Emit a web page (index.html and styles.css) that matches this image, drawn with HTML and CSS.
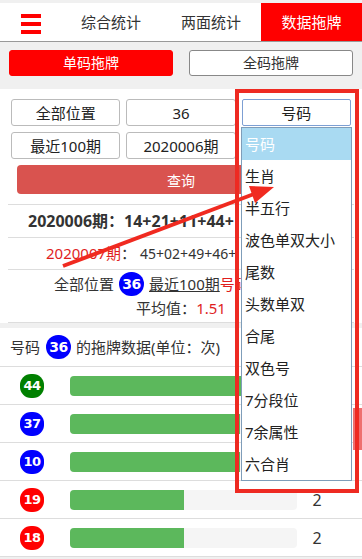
FILE: index.html
```html
<!DOCTYPE html>
<html lang="zh">
<head>
<meta charset="utf-8">
<title>数据拖牌</title>
<link rel="stylesheet" href="styles.css">
</head>
<body>
<div class="page">
  <header class="nav">
    <div class="menu"><span></span><span></span><span></span></div>
    <div class="tab">综合统计</div>
    <div class="tab">两面统计</div>
    <div class="tab active">数据拖牌</div>
  </header>

  <div class="modebar">
    <div class="mode on">单码拖牌</div>
    <div class="mode">全码拖牌</div>
  </div>

  <section class="query">
    <div class="selects">
      <div class="sel">全部位置</div>
      <div class="sel">36</div>
      <div class="sel focus">号码</div>
      <div class="sel">最近100期</div>
      <div class="sel">2020006期</div>
      <div class="sel">全部</div>
    </div>
    <div class="submit">查询</div>
    <ul class="results">
      <li class="r1">2020006期：14+21+11+44+</li>
      <li class="r2"><span class="red">2020007期</span>：<span class="nums">45+02+49+46+</span></li>
      <li class="r3">
        <div class="l1">全部位置 <span class="ball b lg">36</span> <u>最近100期</u><span class="red">号码</span></div>
        <div class="l2">平均值：<span class="red">1.51</span></div>
      </li>
    </ul>
  </section>

  <section class="data">
    <div class="data-head">号码 <span class="ball b lg">36</span> 的拖牌数据(单位：次)</div>
    <div class="row"><span class="ball g">44</span><div class="bar"><div class="fill" style="width:100%"></div></div><span class="cnt">4</span></div>
    <div class="row"><span class="ball b">37</span><div class="bar"><div class="fill" style="width:75%"></div></div><span class="cnt">3</span></div>
    <div class="row"><span class="ball b">10</span><div class="bar"><div class="fill" style="width:75%"></div></div><span class="cnt">3</span></div>
    <div class="row"><span class="ball r">19</span><div class="bar"><div class="fill" style="width:50%"></div></div><span class="cnt">2</span></div>
    <div class="row"><span class="ball r">18</span><div class="bar"><div class="fill" style="width:50%"></div></div><span class="cnt">2</span></div>
  </section>

  <div class="sidetab"></div>

  <ul class="opts">
    <li class="hl">号码</li>
    <li>生肖</li>
    <li>半五行</li>
    <li>波色单双大小</li>
    <li>尾数</li>
    <li>头数单双</li>
    <li>合尾</li>
    <li>双色号</li>
    <li>7分段位</li>
    <li>7余属性</li>
    <li>六合肖</li>
  </ul>

  <div class="frame"></div>

  <svg class="arrow" width="362" height="559" viewBox="0 0 362 559">
    <line x1="63" y1="266" x2="254" y2="194" stroke="#f02a20" stroke-width="4"/>
    <polygon points="274,187 255,203 249,186" fill="#f02a20"/>
  </svg>
</div>
</body>
</html>
```

FILE: styles.css
```css
* { box-sizing: border-box; }

body {
  margin: 0;
  background: #f0f0f0;
  font-family: "Noto Sans", "Noto Sans CJK SC", sans-serif;
  color: #333;
}

.page {
  position: relative;
  width: 362px;
  height: 559px;
  overflow: hidden;
}

/* top navigation */
.nav {
  margin-top: 3px;
  height: 39px;
  background: #fff;
  border-bottom: 1px solid #999;
  display: grid;
  grid-template-columns: 61px 100px 100px 101px;
}
.menu {
  display: flex;
  flex-direction: column;
  gap: 4px;
  padding: 11px 0 0 21px;
}
.menu span {
  display: block;
  width: 20px;
  height: 4px;
  background: #f00;
}
.tab {
  display: flex;
  align-items: center;
  justify-content: center;
  font-size: 15px;
  line-height: 20px;
  color: #333;
}
.tab.active {
  background: #f00;
  color: #fff;
}

/* mode buttons */
.modebar {
  display: flex;
  gap: 16px;
  padding: 8px 9px 13px;
}
.mode {
  flex: 1;
  height: 26px;
  border-radius: 3px;
  border: 1px solid #888;
  background: #fff;
  display: flex;
  align-items: center;
  justify-content: center;
  font-size: 14px;
  line-height: 20px;
}
.mode.on {
  background: #f00;
  border-color: #f00;
  color: #fff;
}

/* query panel */
.query {
  background: #fff;
  padding-top: 10px;
}
.selects {
  display: grid;
  grid-template-columns: repeat(3, 1fr);
  gap: 6px;
  padding: 0 11px;
}
.sel {
  height: 27px;
  border: 1px solid #bbb;
  border-radius: 3px;
  display: flex;
  align-items: center;
  justify-content: center;
  font-size: 15px;
  line-height: 20px;
  color: #222;
}
.sel.focus {
  border-color: #7d9fd3;
  border-radius: 2px;
}
.submit {
  margin: 6px 17px 0;
  height: 29px;
  background: #d9534f;
  color: #fff;
  border-radius: 4px;
  display: flex;
  align-items: center;
  justify-content: center;
  font-size: 14px;
}
.results {
  list-style: none;
  margin: 10px 8px 0;
  padding: 0;
  border-bottom: 1px solid #ddd;
}
.results li {
  border-top: 1px solid #ddd;
  white-space: nowrap;
  overflow: hidden;
}
.r1 {
  height: 33px;
  line-height: 32px;
  padding-left: 20px;
  font-weight: bold;
  font-size: 16px;
}
.r2 {
  height: 32px;
  line-height: 31px;
  padding-left: 38px;
  font-size: 15px;
}
.r2 .nums {
  font-size: 14px;
  padding-left: 4px;
}
.red { color: #e01e1e; }
.r3 {
  padding: 2px 0;
  line-height: 24px;
  font-size: 15px;
}
.r3 .l1 {
  padding-left: 46px;
  display: flex;
  align-items: center;
}
.r3 .l1 .ball { margin: 0 5px; }
.r3 .l2 {
  text-align: center;
}

/* balls */
.ball {
  display: inline-flex;
  align-items: center;
  justify-content: center;
  width: 24px;
  height: 24px;
  border-radius: 11px;
  color: #fff;
  font-family: "DejaVu Sans", sans-serif;
  font-weight: bold;
  font-size: 13px;
  letter-spacing: -0.5px;
  flex: none;
}
.ball.lg {
  width: 25px;
  font-size: 14px;
  border-radius: 12px;
}
.ball.g { background: #008000; }
.ball.b { background: #0000ff; }
.ball.r { background: #ff0000; }

/* data panel */
.data {
  margin-top: 5px;
  background: #fff;
}
.data-head {
  height: 39px;
  border-bottom: 1px solid #ddd;
  display: flex;
  align-items: center;
  padding-left: 10px;
  font-size: 15px;
  line-height: 20px;
  white-space: nowrap;
}
.data-head .ball { margin: 0 5px 0 6px; }
.row {
  height: 38px;
  border-bottom: 1px solid #ddd;
  display: flex;
  align-items: center;
  padding-left: 20px;
}
.bar {
  margin-left: 26px;
  width: 227px;
  height: 20px;
  background: #f5f5f5;
  border-radius: 4px;
  overflow: hidden;
}
.fill {
  height: 100%;
  background: #5cb85c;
}
.cnt {
  width: 40px;
  text-align: center;
  font-size: 16px;
  color: #333;
}

/* overlays */
.sidetab {
  position: absolute;
  left: 353px;
  top: 408px;
  width: 9px;
  height: 42px;
  background: #ee6f6f;
}
.opts {
  position: absolute;
  left: 241px;
  top: 127px;
  width: 111px;
  margin: 0;
  padding: 0;
  list-style: none;
  border: 1px solid #7f9db9;
  background: #fff;
}
.opts li {
  height: 32px;
  line-height: 32px;
  padding-left: 3px;
  font-size: 15px;
  color: #222;
  white-space: nowrap;
}
.opts li.hl {
  background: #a9daf2;
  color: #fff;
}
.frame {
  position: absolute;
  left: 235px;
  top: 89px;
  width: 124px;
  height: 404px;
  border: 4px solid #ee2a22;
}
.arrow {
  position: absolute;
  left: 0;
  top: 0;
  pointer-events: none;
}
```
